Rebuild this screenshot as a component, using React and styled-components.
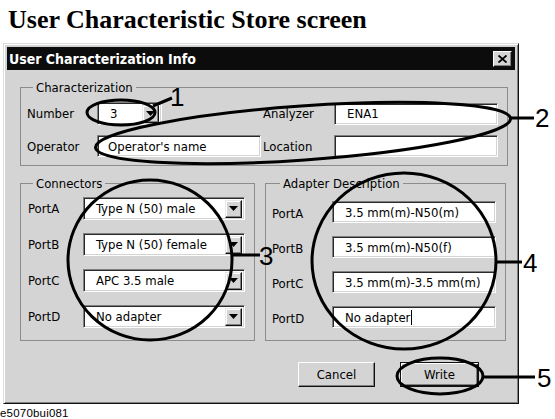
import styled, { createGlobalStyle } from 'styled-components';

const GlobalStyle = createGlobalStyle`
  html, body {
    margin: 0;
    padding: 0;
    background: #fff;
  }
  body {
    width: 555px;
    height: 419px;
    overflow: hidden;
  }
`;

const Page = styled.div`
  position: relative;
  width: 555px;
  height: 419px;
  background: #fff;
  font-family: "DejaVu Sans Condensed", "Liberation Sans", sans-serif;
  color: #000;
`;

const Heading = styled.h1`
  margin: 0;
  padding: 5px 0 0 8px;
  font: bold 26px/30px "Liberation Serif", serif;
  color: #000;
`;

const Window = styled.div`
  box-sizing: border-box;
  margin: 8px 0 0 3px;
  width: 516px;
  height: 361px;
  padding: 3px;
  background: #d4d4d4;
  border: 1px solid;
  border-color: #dcdcdc #111 #111 #dcdcdc;
  box-shadow: inset 1px 1px #fff, inset -1px -1px #808080;
  display: flex;
  flex-direction: column;
`;

const TitleBar = styled.div`
  height: 23px;
  padding: 0 3px 0 2px;
  background: #0c0c0c;
  color: #fff;
  display: flex;
  align-items: center;
  justify-content: space-between;
  font-weight: bold;
  font-size: 14px;
`;

const CloseButton = styled.div`
  box-sizing: border-box;
  width: 19px;
  height: 16px;
  background: #d4d4d4;
  border: 1px solid;
  border-color: #fff #111 #111 #fff;
  box-shadow: inset -1px -1px #808080;
  display: flex;
  align-items: center;
  justify-content: center;
`;

const Body = styled.div`
  flex: 1;
  padding: 10px 7px 0 13px;
  display: flex;
  flex-direction: column;
`;

const Group = styled.fieldset`
  box-sizing: border-box;
  margin: 0;
  width: ${(p) => p.$w}px;
  padding: ${(p) => p.$pad};
  border: 1px solid #8c8c8c;
  min-width: 0;
  display: flex;
  flex-direction: column;
  gap: ${(p) => p.$gap || 10}px;
`;

const Legend = styled.legend`
  margin-left: ${(p) => p.$ml || 5}px;
  padding: 0 3px;
  font-size: 13px;
  line-height: 15px;
`;

const Halves = styled.div`
  display: grid;
  grid-template-columns: 236px 1fr;
`;

const Row = styled.div`
  display: flex;
  align-items: center;
`;

const Label = styled.span`
  width: ${(p) => p.$w}px;
  flex: none;
  font-size: 13px;
  padding-top: ${(p) => p.$dy || 0}px;
  white-space: nowrap;
`;

const Field = styled.div`
  box-sizing: border-box;
  width: ${(p) => p.$w}px;
  height: ${(p) => p.$h || 22}px;
  padding: 0 2px 0 ${(p) => p.$pad || 12}px;
  background: #fff;
  border: 1px solid;
  border-color: #808080 #fff #fff #808080;
  box-shadow: inset 1px 1px #2a2a2a, inset -1px -1px #d4d4d4;
  display: flex;
  align-items: center;
  font-size: 13px;
  white-space: nowrap;
`;

const ComboText = styled.span`
  flex: 1;
`;

const Caret = styled.span`
  width: 1px;
  height: 15px;
  background: #000;
  margin-left: 1px;
`;

const DropButton = styled.span`
  box-sizing: border-box;
  width: 17px;
  height: 18px;
  flex: none;
  background: #d4d4d4;
  border: 1px solid;
  border-color: #e8e8e8 #111 #111 #e8e8e8;
  box-shadow: inset -1px -1px #808080, inset 1px 1px #fff;
  display: flex;
  align-items: center;
  justify-content: center;
`;

const GroupRow = styled.div`
  display: flex;
  gap: 10px;
  margin-top: 10px;
  align-items: flex-start;
`;

const Buttons = styled.div`
  display: flex;
  justify-content: flex-end;
  gap: 25px;
  margin-top: 21px;
  padding-right: 29px;
`;

const Button = styled.button`
  box-sizing: border-box;
  width: ${(p) => p.$w}px;
  height: 25px;
  padding: 0;
  background: #d4d4d4;
  font-family: inherit;
  font-size: 13px;
  color: #000;
  border: 1px solid;
  border-color: ${(p) => (p.$default ? '#111' : '#fff #111 #111 #fff')};
  box-shadow: ${(p) =>
    p.$default
      ? 'inset 1px 1px #fff, inset -1px -1px #111, inset -2px -2px #808080'
      : 'inset -1px -1px #808080'};
`;

const Footer = styled.div`
  margin-top: 3px;
  font: 11.5px/13px "Liberation Sans", sans-serif;
  letter-spacing: 0.2px;
`;

const Marks = styled.svg`
  position: absolute;
  left: 0;
  top: 0;
  pointer-events: none;
  overflow: visible;
`;

const CalloutNumber = styled.text`
  font-family: "Liberation Sans", sans-serif;
  font-size: 26px;
  fill: #000;
`;

function Arrow() {
  return (
    <svg width="9" height="5" viewBox="0 0 9 5">
      <polygon points="0,0 9,0 4.5,5" fill="#000" />
    </svg>
  );
}

function Combo({ w, text }) {
  return (
    <Field $w={w} $h={23}>
      <ComboText>{text}</ComboText>
      <DropButton>
        <Arrow />
      </DropButton>
    </Field>
  );
}

const connectors = [
  ['PortA', 'Type N (50) male'],
  ['PortB', 'Type N (50) female'],
  ['PortC', 'APC 3.5 male'],
  ['PortD', 'No adapter'],
];

const adapters = [
  ['PortA', '3.5 mm(m)-N50(m)'],
  ['PortB', '3.5 mm(m)-N50(f)'],
  ['PortC', '3.5 mm(m)-3.5 mm(m)'],
  ['PortD', 'No adapter'],
];

function Annotations() {
  return (
    <Marks width="555" height="419" viewBox="0 0 555 419">
      <g fill="none" stroke="#000" strokeWidth="3">
        <ellipse cx="121" cy="112.5" rx="34" ry="12.5" />
        <line x1="153" y1="106" x2="172" y2="98" />
        <ellipse cx="303" cy="133" rx="208" ry="27" transform="rotate(-4 303 133)" />
        <line x1="510" y1="118" x2="534" y2="118" />
        <ellipse cx="150" cy="260" rx="82" ry="80" />
        <line x1="231" y1="255" x2="260" y2="255" />
        <ellipse cx="404" cy="261" rx="92" ry="88" />
        <line x1="495" y1="262" x2="522" y2="262" />
        <ellipse cx="440" cy="376" rx="43" ry="18" />
        <line x1="483" y1="377" x2="535" y2="377" />
      </g>
      <CalloutNumber x="170" y="106">1</CalloutNumber>
      <CalloutNumber x="535" y="127">2</CalloutNumber>
      <CalloutNumber x="259" y="265">3</CalloutNumber>
      <CalloutNumber x="523" y="272">4</CalloutNumber>
      <CalloutNumber x="537" y="387">5</CalloutNumber>
    </Marks>
  );
}

export default function App() {
  return (
    <Page>
      <GlobalStyle />
      <Heading>User Characteristic Store screen</Heading>
      <Window>
        <TitleBar>
          <span>User Characterization Info</span>
          <CloseButton>
            <svg width="9" height="8" viewBox="0 0 9 8">
              <path d="M0.5 0.5 L8.5 7.5 M8.5 0.5 L0.5 7.5" stroke="#000" strokeWidth="1.8" />
            </svg>
          </CloseButton>
        </TitleBar>
        <Body>
          <Group $w={488} $pad="7px 9px 8px 6px">
            <Legend $ml={6}>Characterization</Legend>
            <Halves>
              <Row>
                <Label $w={70}>Number</Label>
                <Combo w={65} text="3" />
              </Row>
              <Row>
                <Label $w={71}>Analyzer</Label>
                <Field $w={164}>ENA1</Field>
              </Row>
            </Halves>
            <Halves>
              <Row>
                <Label $w={70}>Operator</Label>
                <Field $w={164} $pad={10}>Operator's name</Field>
              </Row>
              <Row>
                <Label $w={71}>Location</Label>
                <Field $w={164} />
              </Row>
            </Halves>
          </Group>
          <GroupRow>
            <Group $w={235} $pad="6px 9px 12px 7px" $gap={13}>
              <Legend $ml={5}>Connectors</Legend>
              {connectors.map(([port, value]) => (
                <Row key={port}>
                  <Label $w={55}>{port}</Label>
                  <Combo w={162} text={value} />
                </Row>
              ))}
            </Group>
            <Group $w={241} $pad="10px 8px 12px 6px" $gap={13}>
              <Legend $ml={8}>Adapter Description</Legend>
              {adapters.map(([port, value], i) => (
                <Row key={port}>
                  <Label $w={60} $dy={3}>{port}</Label>
                  <Field $w={164}>
                    {value}
                    {i === 3 && <Caret />}
                  </Field>
                </Row>
              ))}
            </Group>
          </GroupRow>
          <Buttons>
            <Button $w={77}>Cancel</Button>
            <Button $w={79} $default>Write</Button>
          </Buttons>
        </Body>
      </Window>
      <Footer>e5070bui081</Footer>
      <Annotations />
    </Page>
  );
}
